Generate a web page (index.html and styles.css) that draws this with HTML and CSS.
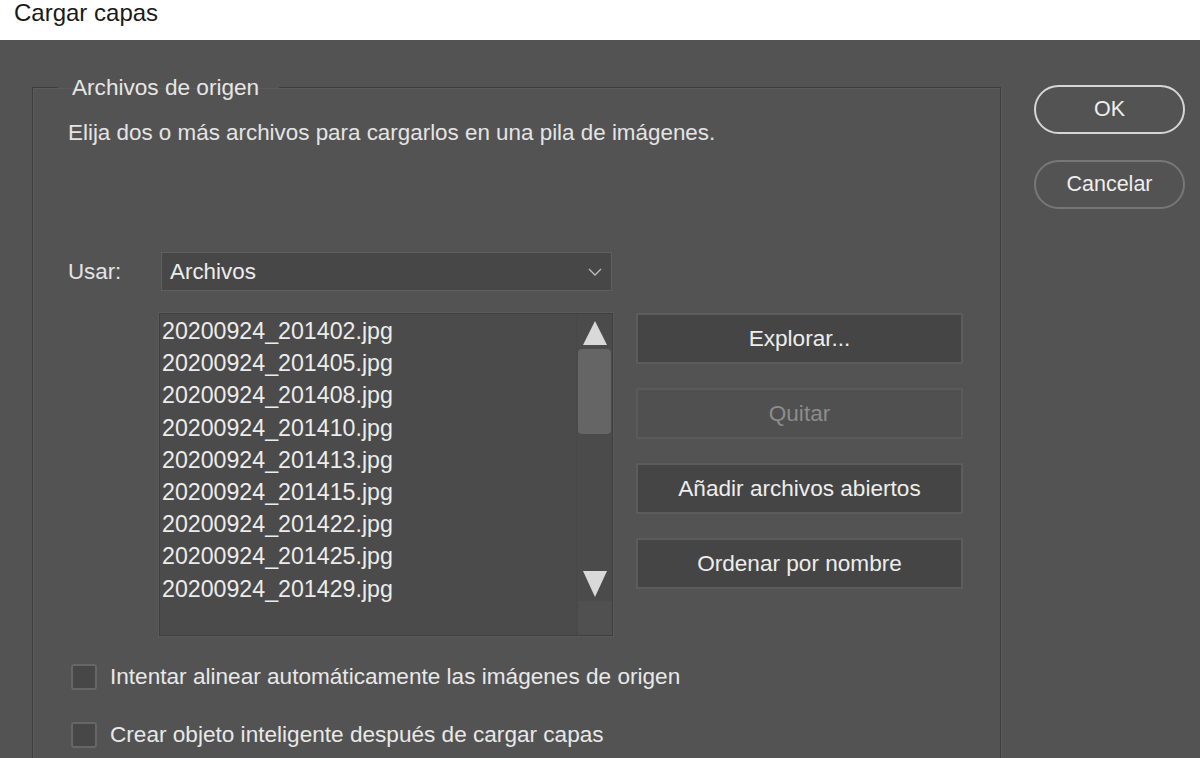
FILE: index.html
```html
<!DOCTYPE html>
<html lang="es">
<head>
<meta charset="utf-8">
<title>Cargar capas</title>
<link rel="stylesheet" href="styles.css">
</head>
<body>
<div class="titlebar">Cargar capas</div>
<div class="dialog">
  <fieldset class="source">
    <legend>Archivos de origen</legend>
    <p class="hint">Elija dos o más archivos para cargarlos en una pila de imágenes.</p>
    <div class="use-row">
      <span class="use-label">Usar:</span>
      <div class="select">
        <span>Archivos</span>
        <svg class="chev" width="14" height="9" viewBox="0 0 14 9"><path d="M1 1 L7 7 L13 1" fill="none" stroke="#bdbdbd" stroke-width="1.3"/></svg>
      </div>
    </div>
    <div class="files-row">
      <div class="listbox">
        <ul class="files">
          <li>20200924_201402.jpg</li>
          <li>20200924_201405.jpg</li>
          <li>20200924_201408.jpg</li>
          <li>20200924_201410.jpg</li>
          <li>20200924_201413.jpg</li>
          <li>20200924_201415.jpg</li>
          <li>20200924_201422.jpg</li>
          <li>20200924_201425.jpg</li>
          <li>20200924_201429.jpg</li>
        </ul>
        <div class="scrollbar">
          <svg class="arrow" width="26" height="26" viewBox="0 0 26 26"><polygon points="13,1 25,25 1,25" fill="#d9d9d9"/></svg>
          <div class="thumb"></div>
          <div class="track"></div>
          <svg class="arrow" width="26" height="28" viewBox="0 0 26 28"><polygon points="1,1 25,1 13,27" fill="#d9d9d9"/></svg>
          <div class="corner"></div>
        </div>
      </div>
      <div class="actions">
        <button class="btn">Explorar...</button>
        <button class="btn disabled">Quitar</button>
        <button class="btn">Añadir archivos abiertos</button>
        <button class="btn">Ordenar por nombre</button>
      </div>
    </div>
    <label class="check"><span class="box"></span><span>Intentar alinear automáticamente las imágenes de origen</span></label>
    <label class="check"><span class="box"></span><span>Crear objeto inteligente después de cargar capas</span></label>
  </fieldset>
  <div class="side">
    <button class="pill ok">OK</button>
    <button class="pill cancel">Cancelar</button>
  </div>
</div>
</body>
</html>
```
FILE: styles.css
```css
* { box-sizing: border-box; }
html, body { margin: 0; padding: 0; }
body {
  width: 1200px;
  height: 758px;
  overflow: hidden;
  font-family: "Liberation Sans", Arial, sans-serif;
  background: #535353;
}
.titlebar {
  height: 40px;
  background: #ffffff;
  color: #1a1a1a;
  font-size: 24px;
  line-height: 26px;
  padding-left: 14px;
}
.dialog {
  height: 718px;
  background: #535353;
  display: flex;
  align-items: flex-start;
  padding-top: 33px;
  color: #e4e4e4;
}
.source {
  margin: 0 0 0 32px;
  width: 969px;
  height: 700px;
  border: 1px solid #3d3d3d;
  box-shadow: inset 1px 1px 0 #5b5b5b, 1px 1px 0 #5b5b5b;
  padding: 0 0 0 35px;
  min-width: 0;
}
.source legend {
  font-size: 22.6px;
  line-height: 26px;
  padding: 2px 20px 0 14px;
  margin-left: -10px;
  color: #e6e6e6;
}
.hint {
  margin: 19px 0 0 0;
  font-size: 22.4px;
  line-height: 26px;
}
.use-row {
  display: flex;
  align-items: center;
  margin-top: 106px;
}
.use-label {
  width: 93px;
  font-size: 22.3px;
}
.select {
  width: 451px;
  height: 39px;
  background: #474747;
  border: 1px solid #5f5f5f;
  display: flex;
  align-items: center;
  justify-content: space-between;
  padding: 0 9px 0 8px;
  font-size: 22.4px;
  color: #ececec;
}
.chev { margin-top: 2px; }
.files-row {
  display: flex;
  align-items: flex-start;
  gap: 23px;
  margin-top: 22px;
  margin-left: 91px;
}
.listbox {
  width: 454px;
  height: 323px;
  background: #4b4b4b;
  border: 1px solid #3f3f3f;
  box-shadow: 0 0 0 1px #5a5a5a;
  display: flex;
  justify-content: space-between;
}
.files {
  list-style: none;
  margin: 0;
  padding: 1px 0 0 2px;
  font-size: 23.2px;
  line-height: 32.2px;
  color: #ececec;
}
.scrollbar {
  width: 36px;
  display: flex;
  flex-direction: column;
  align-items: center;
  padding-top: 6px;
  background: #4b4b4b;
  border-left: 1px solid #484848;
}
.arrow { display: block; }
.thumb {
  width: 33px;
  height: 85px;
  margin-top: 3px;
  background: #656565;
  border-radius: 4px;
}
.track { flex: 1; }
.corner {
  width: 34px;
  height: 34px;
  background: #505050;
  margin-top: 3px;
}
.actions {
  display: flex;
  flex-direction: column;
  gap: 24px;
}
.btn {
  width: 327px;
  height: 51px;
  font-family: inherit;
  font-size: 22.6px;
  color: #ededed;
  background: #454545;
  border: 2px solid #5c5c5c;
  border-radius: 1px;
  padding: 0;
}
.btn.disabled {
  background: #505050;
  color: #8c8c8c;
  border-color: #5a5a5a;
}
.check {
  display: flex;
  align-items: center;
  gap: 13px;
  font-size: 22.6px;
  color: #e8e8e8;
  margin-left: 3px;
  height: 30px;
}
.files-row + .check { margin-top: 26px; }
.check + .check { margin-top: 28px; }
.box {
  width: 26px;
  height: 26px;
  background: #474747;
  border: 2px solid #666666;
  border-radius: 3px;
}
.side {
  display: flex;
  flex-direction: column;
  gap: 26px;
  margin-left: 33px;
  padding-top: 12px;
}
.pill {
  width: 151px;
  height: 49px;
  border-radius: 25px;
  background: #535353;
  font-family: inherit;
  font-size: 21.5px;
  color: #eeeeee;
  padding: 0;
}
.ok { border: 2px solid #d6d6d6; }
.cancel { border: 2px solid #777777; }
```
